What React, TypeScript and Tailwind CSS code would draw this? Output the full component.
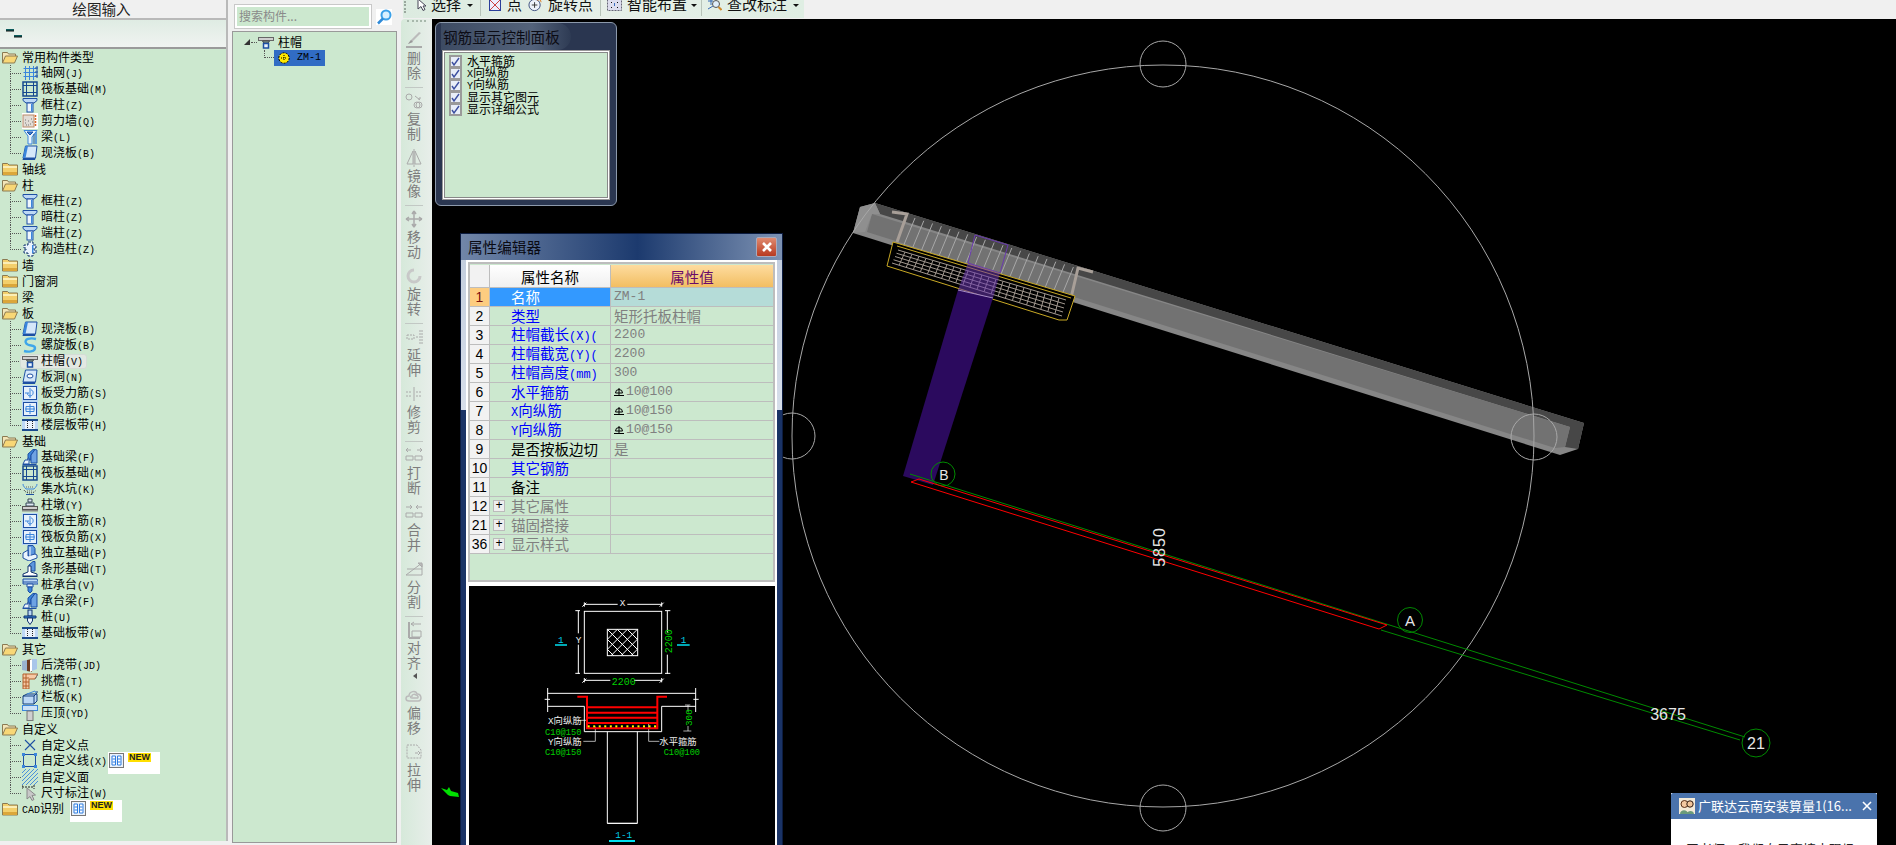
import React from "react";

const B = "#1d4fa3";
const M = "#3b86dc";
const L = "#bcd8f5";

function Icon({ k }: { k: string }) {
  let c: React.ReactNode = null;
  switch (k) {
    case "grid":
      c = (
        <g stroke={M} fill="none">
          <path d="M1.5 3.5h13M1.5 7.5h13M1.5 11.5h13M3.5 1v14M7.5 1v14M11.5 1v14" />
          <path d="M14 2h2v2h-2zM14 6h2v2h-2zM14 10h2v2h-2z" stroke={B} />
        </g>
      );
      break;
    case "raft":
      c = (
        <g fill="none" stroke="#17498f">
          <rect x="1" y="1" width="14" height="14" strokeWidth="1.5" />
          <rect x="4.5" y="4.5" width="7" height="7" />
          <path d="M1 4.5h14M1 11.5h14M4.5 1v14M11.5 1v14" />
        </g>
      );
      break;
    case "col":
      c = (
        <g stroke={B}>
          <path d="M1 1.5h14v2l-3 2.5H4L1 3.5z" fill={L} />
          <rect x="5" y="6" width="6" height="9" fill="#eef6fd" />
          <rect x="9" y="7" width="1.5" height="7.5" fill={M} stroke="none" />
        </g>
      );
      break;
    case "wall":
      c = (
        <g>
          <rect x="0" y="0" width="16" height="16" fill="#fff" />
          <rect x="1" y="2" width="11" height="12" fill="#e2dcd6" stroke="#b98a68" />
          <path d="M3 10h1M6 8h1M8 11h1M4 12h1M9 6h1M6 12h1M10 9h1M3 7h1" stroke="#777" />
          <path d="M13.5 2v12" stroke="#d9682a" strokeWidth="1.5" strokeDasharray="2 1" />
        </g>
      );
      break;
    case "beam":
      c = (
        <g>
          <path d="M2 1.5h13L10 8v7H6V7z" fill="#eaf4fd" stroke={M} />
          <path d="M5 3l6 0-3 3zM12 5v10" stroke={B} fill={M} />
          <path d="M14 3v12" stroke={M} strokeWidth="1.5" />
        </g>
      );
      break;
    case "slab":
      c = (
        <g>
          <path d="M3.5 1H15l-1.5 12H1z" fill="#d5e7f9" stroke={B} />
          <path d="M1 13h12.5l-.5 2H.5z" fill={B} />
          <path d="M3.5 1H6L3.5 13H1z" fill={M} />
        </g>
      );
      break;
    case "helix":
      c = (
        <path d="M14 2C8 .5 2 2 4 6s9 1 9 5-7 4-11 3" fill="none" stroke="#3fa6ea" strokeWidth="2.4" />
      );
      break;
    case "cap":
      c = (
        <g>
          <rect x="0.5" y="3.5" width="15" height="3" fill="#cfcfcf" stroke="#666" />
          <path d="M4.5 7h7L10 9H6z" fill="#8aa" stroke="#444" />
          <rect x="5.5" y="9.5" width="5" height="4.5" fill="#eaf4fd" stroke={B} strokeWidth="1.5" />
        </g>
      );
      break;
    case "hole":
      c = (
        <g>
          <path d="M3.5 1H15l-1.5 12H1z" fill="#d5e7f9" stroke={B} />
          <path d="M1 13h12.5l-.5 2H.5z" fill={B} />
          <ellipse cx="8" cy="7" rx="3" ry="2" fill="#fff" stroke={B} />
        </g>
      );
      break;
    case "rs":
      c = (
        <g>
          <rect x="0.5" y="0.5" width="15" height="15" fill="#fff" stroke={L} />
          <rect x="1.5" y="1.5" width="13" height="13" fill="#e7f1fc" stroke={B} />
          <path d="M8 3v10M3 8h4M9 5c3 0 3 6-1 6-2 0-3-2-2-3" fill="none" stroke={M} />
        </g>
      );
      break;
    case "rf":
      c = (
        <g>
          <rect x="0.5" y="0.5" width="15" height="15" fill="#fff" stroke={L} />
          <rect x="1.5" y="1.5" width="13" height="13" fill="#e7f1fc" stroke={B} />
          <path d="M8 3v10M3 8h10M4 5.5h8v5H4z" fill="none" stroke={M} />
        </g>
      );
      break;
    case "band":
      c = (
        <g>
          <rect x="0" y="2" width="16" height="2" fill="#1a4a8e" />
          <rect x="0" y="12" width="16" height="2" fill="#1a4a8e" />
          <rect x="0" y="4" width="16" height="8" fill="#e9f2fb" />
          <path d="M5.5 4v8M10.5 4v8" stroke="#222" strokeDasharray="1 1" />
          <rect x="0" y="4" width="3" height="8" fill={L} />
          <rect x="13" y="4" width="3" height="8" fill={L} />
        </g>
      );
      break;
    case "fbeam":
      c = (
        <g>
          <path d="M6 5L11 .5h2L9 6v5H6z" fill={M} stroke={B} />
          <path d="M9 6l4-5.5 2 .5v13H9z" fill="#6ea3e3" stroke={B} />
          <path d="M1 15l2-4h3v-2h1v6z" fill="#eef6fd" stroke={B} />
          <path d="M.5 15.5h14" stroke={B} />
        </g>
      );
      break;
    case "pit":
      c = (
        <g fill="none" stroke={M}>
          <path d="M1 3c0 3 2 3 3 5h8c1-2 3-2 3-5" />
          <path d="M2 9c2 4 10 4 12 0" strokeDasharray="1 1" stroke="#333" />
          <path d="M4 13.5h8" stroke={B} />
          <path d="M4 6h8M5 10h6" strokeDasharray="1 1" stroke="#666" />
        </g>
      );
      break;
    case "pier":
      c = (
        <g>
          <path d="M6 2h4v3H6zM4 6h8v3H4z" fill="#dfe8f2" stroke="#345" />
          <rect x="0.5" y="9.5" width="15" height="3" fill="#cfcfcf" stroke="#555" />
          <rect x="0" y="13" width="16" height="1.5" fill="#888" />
        </g>
      );
      break;
    case "foot":
      c = (
        <g>
          <path d="M6 .5h5l2 3v7H6z" fill="#5d97de" stroke={B} />
          <path d="M1 8l5-3v6l7-2 2 1v3l-8 3-6-3z" fill="#eaf4fd" stroke={B} />
          <path d="M8 2v9" stroke="#fff" />
        </g>
      );
      break;
    case "strip":
      c = (
        <g>
          <path d="M7 4l4-3.5h2L13 10H7z" fill="#5d97de" stroke={B} />
          <path d="M1 15v-2l5-2V5h3v6l6 2v2z" fill="#fff" stroke="#10336e" />
          <path d="M.5 15.5h15" stroke="#10336e" />
        </g>
      );
      break;
    case "pilecap":
      c = (
        <g>
          <path d="M1 2h14l1 2v3H1z" fill={L} stroke={B} />
          <path d="M1 5h14" stroke={B} />
          <path d="M5 7h6v3H5z" fill="#eaf4fd" stroke={B} />
          <path d="M6 10h4v4l-2 2-2-2z" fill={M} stroke={B} />
        </g>
      );
      break;
    case "pile":
      c = (
        <g stroke="#10336e">
          <rect x="6" y="1" width="4" height="6" fill={L} />
          <path d="M2 7h12v2H2z" fill={M} />
          <path d="M5.5 9h5v3L8 15.5 5.5 12z" fill="#eaf4fd" />
        </g>
      );
      break;
    case "post":
      c = (
        <g>
          <path d="M0 4l5-1v11l-5-1z" fill="#9ab3cf" />
          <path d="M5 3l5-1v13l-5-1z" fill="#6d3b22" />
          <path d="M10 2h5v10l-5 2z" fill="#a9c6ea" />
          <path d="M8 3l2-1v12l-2 1z" fill="#fff" />
        </g>
      );
      break;
    case "eaves":
      c = (
        <g>
          <path d="M1 1h15l-3 5H7v10H1z" fill="#f6c9a6" stroke="#b25f2a" />
          <path d="M1 5h6M1 9h6M1 13h6M4 1v15" stroke="#b25f2a" />
          <path d="M13 6l3-5" stroke="#777" />
        </g>
      );
      break;
    case "rail":
      c = (
        <g>
          <path d="M1 7l4-2h10v7l-3 3H1z" fill="#bcd8f5" stroke="#123f7e" />
          <path d="M1 7h11v8M12 7l3-3V2" fill="none" stroke="#123f7e" />
          <path d="M5 5l8-3 1 2" fill="none" stroke={M} />
        </g>
      );
      break;
    case "coping":
      c = (
        <g>
          <rect x="0.5" y="0.5" width="15" height="5" fill="#cde2f7" stroke={M} />
          <rect x="5" y="6" width="6" height="9.5" fill="#cfcfcf" stroke="#777" />
        </g>
      );
      break;
    case "cross":
      c = <path d="M3 3l10 10M13 3L3 13" stroke={B} strokeWidth="1.1" fill="none" />;
      break;
    case "square":
      c = (
        <g>
          <rect x="1.5" y="1.5" width="12" height="12" fill="none" stroke={B} />
          <path d="M0 0h3v3H0zM12 0h3v3h-3zM0 12h3v3H0zM12 12h3v3h-3z" fill={M} />
        </g>
      );
      break;
    case "hatch":
      c = (
        <path
          d="M0 4L4 0M0 8L8 0M0 12L12 0M0 16L16 0M4 16L16 4M8 16L16 8M12 16l4-4"
          stroke={M}
          strokeWidth="0.9"
          fill="none"
        />
      );
      break;
    case "dim":
      c = (
        <g>
          <path d="M0 2h12M0 0v4M12 0v4" stroke="#222" fill="none" strokeDasharray="2 1" />
          <path d="M5 3v11l3-2.5 2 4 2-1-2-4 3.5-.5z" fill="#c8c8c8" stroke="#8a8a8a" />
        </g>
      );
      break;
    case "gz":
      c = (
        <g>
          <path
            d="M6 1h5v3h3v3h-2v2h2v3h-3v3H6v-3H2V9h2V7H2V4h4z"
            fill="#eaf4fd"
            stroke="#10336e"
            strokeDasharray="3 1"
          />
          <path d="M10 4h1.5v8H10z" fill={M} />
        </g>
      );
      break;
  }
  return (
    <svg viewBox="0 0 16 16" className="block h-4 w-4 shrink-0">
      {c}
    </svg>
  );
}

function Folder({ open }: { open?: boolean }) {
  return (
    <svg viewBox="0 0 16 14" className="block h-[14px] w-4 shrink-0">
      {open ? (
        <g>
          <path d="M.5 13V2.5h5l1 1.5h7v2" fill="#f3e5b8" stroke="#8b7a52" />
          <path d="M.5 13l3-7h12l-3 7z" fill="#f8d776" stroke="#8b7a52" />
        </g>
      ) : (
        <g>
          <path d="M.5 3V1.5h5L7 3h8.5v10H.5z" fill="#f3cf6b" stroke="#8b7a52" />
          <rect x="1" y="4" width="14" height="2" fill="#fbeeb5" />
          <rect x="1" y="10" width="14" height="3" fill="#dba63a" />
        </g>
      )}
    </svg>
  );
}

function Mixed({ s, cls = "text-[10px]" }: { s: string; cls?: string }) {
  const parts = s.split(/([A-Za-z0-9()@\-]+)/);
  return (
    <>
      {parts.map((p, i) =>
        i % 2 ? (
          <span key={i} className={`font-['Liberation_Mono',monospace] ${cls}`}>
            {p}
          </span>
        ) : (
          <span key={i}>{p}</span>
        ),
      )}
    </>
  );
}

type Node = { label: string; open?: boolean; kids?: [string, string][]; badge?: boolean };

const tree: Node[] = [
  {
    label: "常用构件类型",
    open: true,
    kids: [
      ["grid", "轴网(J)"],
      ["raft", "筏板基础(M)"],
      ["col", "框柱(Z)"],
      ["wall", "剪力墙(Q)"],
      ["beam", "梁(L)"],
      ["slab", "现浇板(B)"],
    ],
  },
  { label: "轴线" },
  {
    label: "柱",
    open: true,
    kids: [
      ["col", "框柱(Z)"],
      ["col", "暗柱(Z)"],
      ["col", "端柱(Z)"],
      ["gz", "构造柱(Z)"],
    ],
  },
  { label: "墙" },
  { label: "门窗洞" },
  { label: "梁" },
  {
    label: "板",
    open: true,
    kids: [
      ["slab", "现浇板(B)"],
      ["helix", "螺旋板(B)"],
      ["cap", "柱帽(V)"],
      ["hole", "板洞(N)"],
      ["rs", "板受力筋(S)"],
      ["rf", "板负筋(F)"],
      ["band", "楼层板带(H)"],
    ],
  },
  {
    label: "基础",
    open: true,
    kids: [
      ["fbeam", "基础梁(F)"],
      ["raft", "筏板基础(M)"],
      ["pit", "集水坑(K)"],
      ["pier", "柱墩(Y)"],
      ["rs", "筏板主筋(R)"],
      ["rf", "筏板负筋(X)"],
      ["foot", "独立基础(P)"],
      ["strip", "条形基础(T)"],
      ["pilecap", "桩承台(V)"],
      ["fbeam", "承台梁(F)"],
      ["pile", "桩(U)"],
      ["band", "基础板带(W)"],
    ],
  },
  {
    label: "其它",
    open: true,
    kids: [
      ["post", "后浇带(JD)"],
      ["eaves", "挑檐(T)"],
      ["rail", "栏板(K)"],
      ["coping", "压顶(YD)"],
    ],
  },
  {
    label: "自定义",
    open: true,
    kids: [
      ["cross", "自定义点"],
      ["square", "自定义线(X)"],
      ["hatch", "自定义面"],
      ["dim", "尺寸标注(W)"],
    ],
  },
  { label: "CAD识别", badge: true },
];

function NewBadge({ left }: { left: string }) {
  return (
    <div className={`absolute top-[-1px] z-10 flex h-[22px] w-[52px] items-start bg-white pl-px pt-px ${left}`}>
      <svg viewBox="0 0 15 15" className="block h-[15px] w-[15px]">
        <rect x="0.5" y="0.5" width="14" height="14" fill="#eaf2fb" stroke="#777" />
        <path d="M3 3h3.5v9H3zM8.5 3H12v9H8.5z" fill="#fff" stroke="#2f7de0" />
        <path d="M3.5 6h2.5M3.5 9h2.5M9 6h2.5M9 9h2.5" stroke="#2f7de0" />
      </svg>
      <span className="ml-[4px] h-[9px] bg-[#ffdf00] px-px font-['Liberation_Sans',sans-serif] text-[9px] leading-[9px] font-bold text-[#222]">
        NEW
      </span>
    </div>
  );
}

function Tree() {
  return (
    <div className="flex-1 overflow-hidden border-t-2 border-[#9a9a9a] text-[12px] leading-4 text-black">
      {tree.map((n) => (
        <div key={n.label}>
          <div className="relative flex h-4 items-center pl-[2px]">
            <Folder open={n.open} />
            <span className="ml-[4px] whitespace-nowrap">
              <Mixed s={n.label} />
            </span>
            {n.badge && <NewBadge left="left-[70px]" />}
          </div>
          {n.kids?.map(([k, label], i) => {
            const last = i === n.kids!.length - 1;
            const hot = label === "柱帽(V)";
            return (
              <div key={label} className="relative flex h-4 items-center pl-[22px]">
                <span className="absolute top-0 left-[10px] h-[9px] w-[11px] border-b border-l border-dotted border-[#555]" />
                {!last && <span className="absolute top-[9px] left-[10px] h-[7px] border-l border-dotted border-[#555]" />}
                {hot && (
                  <span className="absolute top-px left-[20px] h-[15px] w-[67px] rounded-[3px] border border-[#d4dcd6] bg-[#e2e8e2]" />
                )}
                <span className="relative flex items-center">
                  <Icon k={k} />
                  <span className="ml-[3px] whitespace-nowrap">
                    <Mixed s={label} />
                  </span>
                </span>
                {label === "自定义线(X)" && <NewBadge left="left-[108px]" />}
              </div>
            );
          })}
        </div>
      ))}
    </div>
  );
}

function ToolIcon({ k }: { k: number }) {
  const shapes: React.ReactNode[] = [
    <g key="0"><path d="M3 13l4-2 9-9-2-1-8 8z" fill="#bbb" /><path d="M1 16h16" stroke="#aaa" strokeWidth="2" /><path d="M3 13l3-4 2 2z" fill="#999" /></g>,
    <g key="1" fill="none" stroke="#aaa"><circle cx="4" cy="5" r="3" /><circle cx="14" cy="13" r="3" /><circle cx="12" cy="13" r="3" /><path d="M10 4l5 4M13 7h2V5" /></g>,
    <g key="2" fill="none" stroke="#aaa"><path d="M8 2L2 15h6zM10 2l6 13h-6z" /><path d="M9 0v18" /></g>,
    <g key="3" fill="none" stroke="#aaa" strokeWidth="1.5"><path d="M9 1v16M1 9h16M9 1L7 4M9 1l2 3M9 17l-2-3M9 17l2-3M1 9l3-2M1 9l3 2M17 9l-3-2M17 9l-3 2" /></g>,
    <path key="4" d="M9 3a6 6 0 1 0 6 6" fill="none" stroke="#c8c8c8" strokeWidth="3" />,
    <g key="5" fill="none" stroke="#aaa"><path d="M2 7h7v4H2zM11 9h2M15 2v14M17 2v14" strokeDasharray="2 1" /></g>,
    <g key="6" fill="none" stroke="#aaa"><path d="M1 7h6M1 11h6M11 7h6M11 11h6" strokeDasharray="2 1" /><path d="M9 2v14" /></g>,
    <g key="7" fill="none" stroke="#aaa"><path d="M1 4h5M3 2L1 4l2 2M17 4h-5M15 2l2 2-2 2" /><path d="M1 10h7v4H1zM10 10h7v4h-7z" /></g>,
    <g key="8" fill="none" stroke="#aaa"><path d="M1 4h6M5 2l2 2-2 2M17 4h-6M13 2l-2 2 2 2" /><path d="M1 10h7v4H1zM10 10h7v4h-7z" /></g>,
    <g key="9" fill="none" stroke="#aaa"><path d="M1 15l16-12M1 15h16V4M2 9h15" /><path d="M13 3l4 0 0 4z" fill="#bbb" /></g>,
    <g key="10" fill="none" stroke="#aaa"><path d="M4 1v16M15 17H4" strokeWidth="2" /><path d="M6 3h10M9 1L6 3l3 2M7 10h9v6H7z" /></g>,
    <g key="11" fill="none" stroke="#bbb" strokeWidth="1.5"><path d="M4 15c-4 0-4-5 0-5 0-5 7-6 8-2 4-1 6 7 1 7z" /><path d="M7 12c-2 0-2-2 0-2 0-2 3-2 4-1 2 0 3 3 1 3z" /></g>,
    <g key="12" fill="none" stroke="#aaa"><path d="M2 2h10l4 5v8H2z" strokeDasharray="2 1" /><path d="M10 10h3M13 8l2 2-2 2" /></g>,
  ];
  return (
    <svg viewBox="0 0 18 18" className="block h-[18px] w-[18px]">
      {shapes[k]}
    </svg>
  );
}

const tools: ([number, string] | null)[] = [
  [0, "删除"],
  null,
  [1, "复制"],
  [2, "镜像"],
  null,
  [3, "移动"],
  [4, "旋转"],
  null,
  [5, "延伸"],
  [6, "修剪"],
  null,
  [7, "打断"],
  [8, "合并"],
  [9, "分割"],
  null,
  [10, "对齐"],
  [11, "偏移"],
  [12, "拉伸"],
];

function ToolStrip() {
  return (
    <div className="flex w-[31px] flex-col items-center overflow-hidden rounded-tl-[4px] bg-[linear-gradient(to_right,#d6e9da,#e8eeea)] pt-[1px] pr-[5px] text-[14px] leading-[15px] text-[#7d7d7d]">
      <div className="mb-[8px] ml-[5px] h-[2px] w-[19px] border-t-2 border-dotted border-[#a8b8ac]" />
      {tools.map((t, i) =>
        t ? (
          <div key={i} className={`flex flex-col items-center ${t[0] === 10 ? "h-[65px]" : "h-[57px]"}`}>
            <div className="flex h-[20px] items-center">
              <ToolIcon k={t[0]} />
            </div>
            <div className="w-[15px] text-center">{t[1][0]}</div>
            <div className="w-[15px] text-center">{t[1][1]}</div>
            {t[0] === 10 && <div className="mt-[3px] ml-[2px] h-0 w-0 border-y-[3px] border-r-[4px] border-y-transparent border-r-[#555]" />}
          </div>
        ) : (
          <div key={i} className="mb-[3px] h-px w-[18px] shrink-0 bg-[#c2c8c4]" />
        ),
      )}
    </div>
  );
}

function Arrow({ cls }: { cls: string }) {
  return <span className={`h-0 w-0 border-x-[3px] border-t-[3px] border-x-transparent border-t-[#111] ${cls}`} />;
}
function Sep({ cls }: { cls: string }) {
  return <span className={`h-[16px] w-px shrink-0 bg-[#b8c4ba] ${cls}`} />;
}
function BarText({ s, cls }: { s: string; cls: string }) {
  return <span className={`mb-[2px] whitespace-nowrap ${cls}`}>{s}</span>;
}

function TopBar() {
  return (
    <div className="flex h-[19px] items-start bg-[#f0f0f0] pl-[2px]">
      <div className="flex h-[18px] w-[401px] items-start overflow-hidden bg-[linear-gradient(to_right,#dcebe0,#e6efe8,#dfeee3)] text-[15px] leading-[10px] text-[#111]">
        <span className="mt-[1px] ml-[1px] h-[12px] w-[2px] shrink-0 border-l-2 border-dotted border-[#9aa89e]" />
        <div className="ml-[11px] flex h-[10px] items-center">
          <svg viewBox="0 0 10 12" className="h-[12px] w-[10px]">
            <path d="M1 0v10l3-2.5 2 4 2-1-2-3.5h3z" fill="#fff" stroke="#445" />
          </svg>
          <BarText s="选择" cls="ml-[4px]" />
          <Arrow cls="ml-[6px]" />
        </div>
        <Sep cls="ml-[7px] mr-[8px]" />
        <div className="flex h-[10px] items-center">
          <svg viewBox="0 0 12 12" className="h-[12px] w-[12px]">
            <rect x="0.5" y="0.5" width="11" height="11" fill="#eef" stroke="#2b3f9a" />
            <path d="M1 1l10 10M11 1L1 11" stroke="#c44" />
          </svg>
          <BarText s="点" cls="ml-[6px]" />
        </div>
        <div className="ml-[6px] flex h-[10px] items-center">
          <svg viewBox="0 0 16 14" className="h-[14px] w-[15px]">
            <circle cx="7" cy="7" r="6" fill="#eef3fa" stroke="#3a4c7c" />
            <path d="M4 7h6M7 4v6" stroke="#333" />
            <path d="M10 2l3-1 1 3" stroke="#d97a24" fill="none" />
          </svg>
          <BarText s="旋转点" cls="ml-[5px]" />
        </div>
        <Sep cls="ml-[7px] mr-[6px]" />
        <div className="flex h-[10px] items-center">
          <svg viewBox="0 0 15 12" className="h-[12px] w-[15px]">
            <rect x="0.5" y="0.5" width="14" height="11" fill="#dde" stroke="#667" strokeDasharray="2 1" />
            <path d="M4 3h1v1H4zM10 3h1v1h-1zM4 8h1v1H4zM10 8h1v1h-1z" fill="#111" />
            <path d="M7 4h1v3H7z" fill="#3a6fc0" />
          </svg>
          <BarText s="智能布置" cls="ml-[5px]" />
          <Arrow cls="ml-[4px]" />
        </div>
        <Sep cls="ml-[4px] mr-[5px]" />
        <div className="flex h-[10px] items-center">
          <svg viewBox="0 0 15 12" className="h-[12px] w-[15px]">
            <path d="M1 2h5M4 0v6M1 10l5-3" stroke="#3568b5" fill="none" />
            <circle cx="9" cy="5" r="3.5" fill="#dfeefa" stroke="#555" />
            <path d="M11.5 8l3 3" stroke="#d08a2a" strokeWidth="2" />
          </svg>
          <BarText s="查改标注" cls="ml-[5px]" />
          <Arrow cls="ml-[6px]" />
        </div>
      </div>
    </div>
  );
}

function Check({ label }: { label: string }) {
  return (
    <div className="flex h-[12px] items-center overflow-visible">
      <span className="flex h-[13px] w-[13px] shrink-0 items-center justify-center border-2 border-[#9a9a9a] bg-[#e8eef8] text-[#3c4fa0]">
        <svg viewBox="0 0 9 9" className="h-[9px] w-[9px]">
          <path d="M1 5l2 3 5-7" fill="none" stroke="currentColor" strokeWidth="1.4" />
        </svg>
      </span>
      <span className="ml-[5px] whitespace-nowrap">
        <Mixed s={label} />
      </span>
    </div>
  );
}

function RebarPanel() {
  return (
    <div className="absolute top-[3px] left-[3px] flex h-[184px] w-[182px] flex-col rounded-[6px] border border-[#8c99ab] bg-[#2a3650] px-[6px] pb-[5px]">
      <div className="h-[27px] w-[130px] -ml-px rounded-r-full bg-[linear-gradient(to_right,#3d4b63,#53627a_70%,#2e3b54)] pl-[2px] text-[14.6px] leading-[28px] text-[#0c0c14]">
        钢筋显示控制面板
      </div>
      <div className="flex-1 border border-[#999] bg-white p-px">
        <div className="h-full border border-[#888] bg-[#cce8cf] pt-[2px] pl-[4px] text-[12px] leading-[12px] text-black">
          {["水平箍筋", "X向纵筋", "Y向纵筋", "显示其它图元", "显示详细公式"].map((l) => (
            <Check key={l} label={l} />
          ))}
        </div>
      </div>
    </div>
  );
}

const rows: { n: string; name: string; val?: string; c: string; bar?: boolean; plus?: boolean }[] = [
  { n: "1", name: "名称", val: "ZM-1", c: "text-white" },
  { n: "2", name: "类型", val: "矩形托板柱帽", c: "text-[#0000ff]" },
  { n: "3", name: "柱帽截长(X)(", val: "2200", c: "text-[#0000ff]" },
  { n: "4", name: "柱帽截宽(Y)(", val: "2200", c: "text-[#0000ff]" },
  { n: "5", name: "柱帽高度(mm)", val: "300", c: "text-[#0000ff]" },
  { n: "6", name: "水平箍筋", val: "10@100", bar: true, c: "text-[#0000ff]" },
  { n: "7", name: "X向纵筋", val: "10@150", bar: true, c: "text-[#0000ff]" },
  { n: "8", name: "Y向纵筋", val: "10@150", bar: true, c: "text-[#0000ff]" },
  { n: "9", name: "是否按板边切", val: "是", c: "text-black" },
  { n: "10", name: "其它钢筋", c: "text-[#0000ff]" },
  { n: "11", name: "备注", c: "text-black" },
  { n: "12", name: "其它属性", plus: true, c: "text-[#808080]" },
  { n: "21", name: "锚固搭接", plus: true, c: "text-[#808080]" },
  { n: "36", name: "显示样式", plus: true, c: "text-[#808080]" },
];

function RebarMark() {
  return (
    <svg viewBox="0 0 10 10" className="mr-[2px] h-[10px] w-[10px] shrink-0">
      <path d="M1.5 6a3.5 3.5 0 0 1 7 0z" fill="none" stroke="#000" />
      <path d="M5 1v7M0 8.5h10" stroke="#000" />
    </svg>
  );
}

function PropertyGrid() {
  const mono = "font-['Liberation_Mono',monospace]";
  return (
    <div className="h-[320px] shrink-0 border-2 border-[#bdbdbd] bg-[#cce8cf] pt-px text-[14.5px] leading-[18px]">
      <div className="flex h-[23px] border-b border-[#bdbdbd]">
        <div className="w-[20px] border-r border-[#bdbdbd] bg-[#f2f2f2]" />
        <div className="w-[121px] border-r border-[#bdbdbd] bg-[linear-gradient(to_bottom,#ffffff,#f0f0f0)] text-center leading-[23px] text-black">
          属性名称
        </div>
        <div className="w-[162px] bg-[linear-gradient(to_bottom,#fedc9f,#f2be62)] text-center leading-[23px] text-[#6a0a6a]">
          属性值
        </div>
      </div>
      {rows.map((r, i) => (
        <div key={r.n} className="flex h-[19px] border-b border-[#bdbdbd]">
          <div
            className={`w-[20px] border-r border-[#bdbdbd] text-center font-['Liberation_Sans',sans-serif] text-[14px] ${i === 0 ? "bg-[#fdcd80] text-[#7a1010]" : "bg-[#f2f2f2] text-black"}`}
          >
            {r.n}
          </div>
          <div className={`flex w-[121px] items-center border-r border-[#bdbdbd] pl-[3px] ${i === 0 ? "bg-[#3399ff]" : ""} ${r.c}`}>
            <span className="flex h-[12px] w-[18px] shrink-0 items-start">
              {r.plus && (
                <span className={`flex h-[12px] w-[12px] items-center justify-center border border-[#bbb] bg-[#eee] text-[12px] leading-[10px] text-black ${mono}`}>
                  +
                </span>
              )}
            </span>
            <span className="whitespace-nowrap">
              <Mixed s={r.name} cls="text-[12px]" />
            </span>
          </div>
          <div className={`flex w-[162px] items-center pl-[3px] whitespace-nowrap text-[#808080] ${i === 0 ? "bg-[#b5dcd8]" : ""}`}>
            {r.bar && <RebarMark />}
            {r.val && <Mixed s={r.val} cls="text-[13px]" />}
          </div>
        </div>
      ))}
    </div>
  );
}

function SectionDrawing() {
  const m = "font-['Liberation_Mono',monospace]";
  const s = "font-['Noto_Sans_CJK_SC',sans-serif]";
  const hatch: string[] = [];
  for (let i = -4; i < 8; i++) {
    const x = 472 + i * 30;
    hatch.push(`M${x} 178l80 80M${x + 90} 178l-80 80`);
  }
  return (
    <svg viewBox="57 48 918 777" className="block h-[259px] w-[306px]">
      <g fill="none" stroke="#fff" strokeWidth="3">
        <rect x="403" y="124" width="232" height="186" />
        <path d="M403 103h100M532 103h103M403 97v13M635 97v13M397 110l12-12M629 110l12-12" />
        <path d="M385 122v68M385 224v88M376 122h14M376 310h14" />
        <path d="M652 122v66M652 254v58M645 122h16M645 310h16" />
        <path d="M403 331h78M552 331h83M403 324v13M635 324v13M397 338l12-12M629 338l12-12" />
        <path d="M293 370h444M293 409h110M635 409h102M293 354v72M737 354v72M284 388h16M730 388h16" />
        <path d="M403 409v76h232v-76M472 485v275h90V485M472 760h90" />
        <path d="M385 451h26M400 514h36v-44M628 514h-32v-54M714 405v20M714 468v15M700 483h24M705 405h16" strokeWidth="2" />
      </g>
      <clipPath id="hatchClip">
        <rect x="472" y="178" width="91" height="79" />
      </clipPath>
      <g clipPath="url(#hatchClip)">
        <path d={hatch.join("")} stroke="#fff" strokeWidth="3" fill="none" />
      </g>
      <rect x="472" y="178" width="91" height="79" fill="none" stroke="#fff" strokeWidth="3" />
      <g fill="none" stroke="#f00" strokeWidth="6">
        <path d="M382 380h29v95h211V380h29" />
        <path d="M411 412h211M411 428h211M411 443h211M411 459h211" />
      </g>
      <g fill="#ff0">
        {Array.from({ length: 13 }).map((_, i) => (
          <rect key={i} x={413 + i * 16.6} y="466" width="6" height="6" />
        ))}
      </g>
      <g fontSize="26" className={m} fill="#00d000">
        <text x="485" y="344" fontSize="30">2200</text>
        <text x="285" y="494">C10@150</text>
        <text x="285" y="556">C10@150</text>
        <text x="641" y="556">C10@100</text>
        <text transform="translate(665 250) rotate(-90)" fontSize="30">2200</text>
        <text transform="translate(725 468) rotate(-90)" fontSize="28">300</text>
      </g>
      <g fontSize="28" fill="#eee" className={s}>
        <text x="294" y="461"><tspan className={m}>X</tspan>向纵筋</text>
        <text x="294" y="524"><tspan className={m}>Y</tspan>向纵筋</text>
        <text x="628" y="524">水平箍筋</text>
        <text x="509" y="108" className={m}>X</text>
        <text x="377" y="218" className={m}>Y</text>
      </g>
      <g fill="#00d0e8" className={m} fontSize="28">
        <text x="324" y="218">1</text>
        <text x="692" y="218">1</text>
        <text x="496" y="803">1-1</text>
      </g>
      <path d="M315 225h36M681 225h38" stroke="#00e0f0" strokeWidth="4" />
      <path d="M477 813h78" stroke="#00e0f0" strokeWidth="6" />
    </svg>
  );
}

function PropertyEditor() {
  return (
    <div className="absolute top-[214px] left-[28px] flex h-[640px] w-[323px] flex-col border border-[#0c1c40] bg-[linear-gradient(to_bottom,#c0cbdc_0,#d6deea_176px,#1a3366_176px)] px-[5px] pb-[4px]">
      <div className="-mx-[5px] flex h-[26px] shrink-0 items-center justify-between bg-[linear-gradient(to_right,#7186a8,#1c3a6e_55%,#7d92b3)] pr-[5px] pl-[7px] text-[14.6px] text-[#0a0a12]">
        <span>属性编辑器</span>
        <span className="flex h-[20px] w-[21px] items-center justify-center rounded-[2px] border border-[#aab] bg-[linear-gradient(to_bottom,#e08a70,#b83a20)]">
          <svg viewBox="0 0 12 12" className="h-[12px] w-[12px]">
            <path d="M2 2l8 8M10 2l-8 8" stroke="#fff" strokeWidth="2.6" />
          </svg>
        </span>
      </div>
      <div className="flex flex-1 flex-col bg-white p-[2px]">
        <PropertyGrid />
        <div className="mt-[4px] ml-px w-[306px] flex-1 bg-black">
          <SectionDrawing />
        </div>
      </div>
    </div>
  );
}

function Drawing() {
  const sans = "font-['Liberation_Sans',sans-serif]";
  const grid: string[] = [];
  for (let i = 1; i < 24; i++) {
    const t = i / 24;
    grid.push(`M${898 + 168 * t} ${250 + 50 * t}L${892 + 170 * t} ${263 + 53 * t}`);
  }
  for (let i = 0; i <= 4; i++) {
    const t = i / 4;
    const x1 = 898 - 6 * t;
    const y1 = 250 + 13 * t;
    const x2 = 1066 - 4 * t;
    const y2 = 300 + 16 * t;
    grid.push(`M${x1} ${y1}L${x2} ${y2}`);
  }
  const bars: string[] = [];
  for (let i = 0; i < 19; i++) {
    const x = 915 + i * 8.8;
    const y = 218 + (x - 915) * 0.31;
    bars.push(`M${x} ${y}l-12 29`);
  }
  return (
    <svg viewBox="432 19 1464 826" className="absolute inset-0 block h-[826px] w-[1464px]">
      <path d="M853 233L860 207L875 203L1584 423L1578 449L1560 455Z" fill="#868686" />
      <path d="M875 203L1584 423L1578 449L1565 447L1570 427L880 214Z" fill="#474747" />
      <path d="M872 214L1570 427L1565 447L1555 448L867 232Z" fill="#727272" />
      <path d="M860 207L875 203L880 214L872 214L865 232L853 233Z" fill="#8f8f8f" />
      <path d={bars.join("")} stroke="#a8a8a8" strokeWidth="1" fill="none" />
      <path d="M892 212L907 214L897 242M1093 272L1078 268L1067 315" stroke="#a89f98" strokeWidth="3" fill="none" />
      <path d="M975 235L1008 245L1000 273L968 263Z" fill="none" stroke="#6a3ab0" />
      <path d="M893 242L1075 296L1067 320L1059 320L887 266Z" fill="#000" stroke="#c9a925" />
      <path d="M897 246L1071 298" stroke="#c9a925" fill="none" />
      <path d={grid.join("")} stroke="#a2988f" strokeWidth="1" fill="none" />
      <path d="M968 263L1000 273L993 298L958 290Z" fill="#6a36b0" fillOpacity="0.55" />
      <path d="M958 290L993 298L933 485L903 476Z" fill="#2b0a5e" />
      <path d="M958 290L993 298" stroke="#a68cc8" />
      <g fill="none" stroke="#a8a8a8">
        <circle cx="1163" cy="436" r="371" />
        <circle cx="1163" cy="64" r="23" />
        <circle cx="1163" cy="808" r="23" />
        <circle cx="792" cy="436" r="23" />
        <circle cx="1534" cy="437" r="23" />
      </g>
      <g fill="none" stroke="#008a00">
        <circle cx="943" cy="474" r="12" />
        <circle cx="1410" cy="620" r="12.5" />
        <circle cx="1756" cy="743" r="14" />
        <path d="M910 474L1745 737" />
        <path d="M1381 630L1740 740" />
      </g>
      <g fill="none" stroke="#f00">
        <path d="M911 482L1379 629L1387 625L919 479L911 482" />
      </g>
      <g fill="#e6e6e6" className={sans} textAnchor="middle">
        <text x="944" y="480" fontSize="14">B</text>
        <text x="1410" y="626" fontSize="15">A</text>
        <text x="1756" y="749" fontSize="16">21</text>
        <text x="1668" y="720" fontSize="16">3675</text>
        <text transform="translate(1165 547) rotate(-90)" fontSize="16" letterSpacing="1">5850</text>
      </g>
      <path d="M441 788L447 790L449 787L451 791L458 793L459 797L450 796L448 795Z" fill="#00e000" />
    </svg>
  );
}

function ChatPopup() {
  return (
    <div className="absolute top-[774px] left-[1239px] w-[206px] bg-white">
      <div className="flex h-[26px] items-center rounded-t-[2px] bg-[#4a73ac] pl-[8px] pr-[5px] text-[13px] text-white">
        <svg viewBox="0 0 16 16" className="h-[16px] w-[16px] shrink-0">
          <rect width="16" height="16" fill="#f3ead8" />
          <circle cx="5.5" cy="6" r="3.5" fill="#f3c9a2" stroke="#5a2e18" />
          <circle cx="11" cy="6" r="3.2" fill="#f0c49a" stroke="#2e1a10" />
          <path d="M1 16c0-5 8-5 8 0zM8 16c0-4 7-4 7 0z" fill="#6a9b7a" />
        </svg>
        <span className="ml-[3px] w-[160px] overflow-hidden whitespace-nowrap">广联达云南安装算量1(16...</span>
        <svg viewBox="0 0 10 10" className="ml-auto h-[10px] w-[10px]">
          <path d="M1 1l8 8M9 1L1 9" stroke="#fff" strokeWidth="1.6" />
        </svg>
      </div>
      <div className="h-[40px] pt-[20px] pl-[15px] text-[13px] leading-[20px] whitespace-nowrap text-[#222]">王老师，我们自己直接去现场</div>
    </div>
  );
}

export default function App() {
  return (
    <div className="flex h-[845px] w-[1896px] overflow-hidden bg-[#f0f0f0] font-['Noto_Sans_CJK_SC','Liberation_Sans',sans-serif]">
      <div className="flex h-[841px] w-[228px] shrink-0 flex-col border-r-2 border-[#b9b9b9]">
        <div className="h-[20px] shrink-0 border-b-2 border-[#b9b9b9] pr-[23px] text-center text-[14.6px] leading-[18px] text-[#222]">绘图输入</div>
        <div className="flex h-[27px] shrink-0 items-center bg-[linear-gradient(to_bottom,#dfece3,#f0f3f1)] pl-[6px]">
          <svg viewBox="0 0 16 10" className="h-[10px] w-[16px]">
            <path d="M0 0h8v2H0zM8 6h8v2H8z" fill="#0d5c5c" />
            <path d="M0 2h8M8 8h8" stroke="#111" />
          </svg>
        </div>
        <div className="flex min-h-0 flex-1 flex-col bg-[#cce8cf]">
          <Tree />
        </div>
      </div>
      <div className="flex h-[843px] w-[173px] shrink-0 flex-col pr-[4px] pl-[4px]">
        <div className="flex h-[31px] shrink-0 items-center pt-[2px]">
          <div className="ml-[3px] h-[23px] w-[136px] border-2 border-white bg-[#cce8cf] pl-[2px] text-[12px] leading-[18px] text-[#8a8a8a] outline outline-[#c8c8c8]">搜索构件...</div>
          <svg viewBox="0 0 16 16" className="ml-[5px] h-[16px] w-[16px] bg-white">
            <circle cx="10" cy="6" r="4.5" fill="#d8f0ff" stroke="#3aa0e8" strokeWidth="2" />
            <path d="M7 9.5L2 14.5" stroke="#2e8ad8" strokeWidth="2.5" />
          </svg>
        </div>
        <div className="min-h-0 flex-1 border border-[#999] bg-[#cce8cf] text-[12px] leading-4">
          <div className="relative mt-[2px] flex h-4 items-center pl-[11px]">
            <span className="h-0 w-0 border-b-[6px] border-l-[6px] border-b-[#333] border-l-transparent" />
            <span className="mx-[1px] w-[6px] border-b border-dotted border-[#555]" />
            <Icon k="cap" />
            <span className="ml-[4px] text-[12px]">柱帽</span>
          </div>
          <div className="relative flex h-4 items-center pl-[41px]">
            <span className="absolute top-0 left-[31px] h-[8px] w-[10px] border-b border-l border-dotted border-[#555]" />
            <div className="flex h-[16px] w-[51px] items-center bg-[#316cc4] pl-[4px]">
              <svg viewBox="0 0 12 12" className="h-[12px] w-[12px]">
                <circle cx="6" cy="6" r="5.2" fill="#ffe800" stroke="#000" strokeDasharray="2 1.2" />
                <path d="M3 6h6M6 3v6" stroke="#000" strokeDasharray="1 1" />
              </svg>
              <span className="ml-[7px] font-['Liberation_Mono',monospace] text-[10px] text-black">ZM-1</span>
            </div>
          </div>
        </div>
      </div>
      <div className="flex min-w-0 flex-1 flex-col">
        <TopBar />
        <div className="flex min-h-0 flex-1">
          <ToolStrip />
          <div className="relative min-w-0 flex-1 overflow-hidden bg-black">
            <Drawing />
            <RebarPanel />
            <PropertyEditor />
            <ChatPopup />
          </div>
        </div>
      </div>
    </div>
  );
}
